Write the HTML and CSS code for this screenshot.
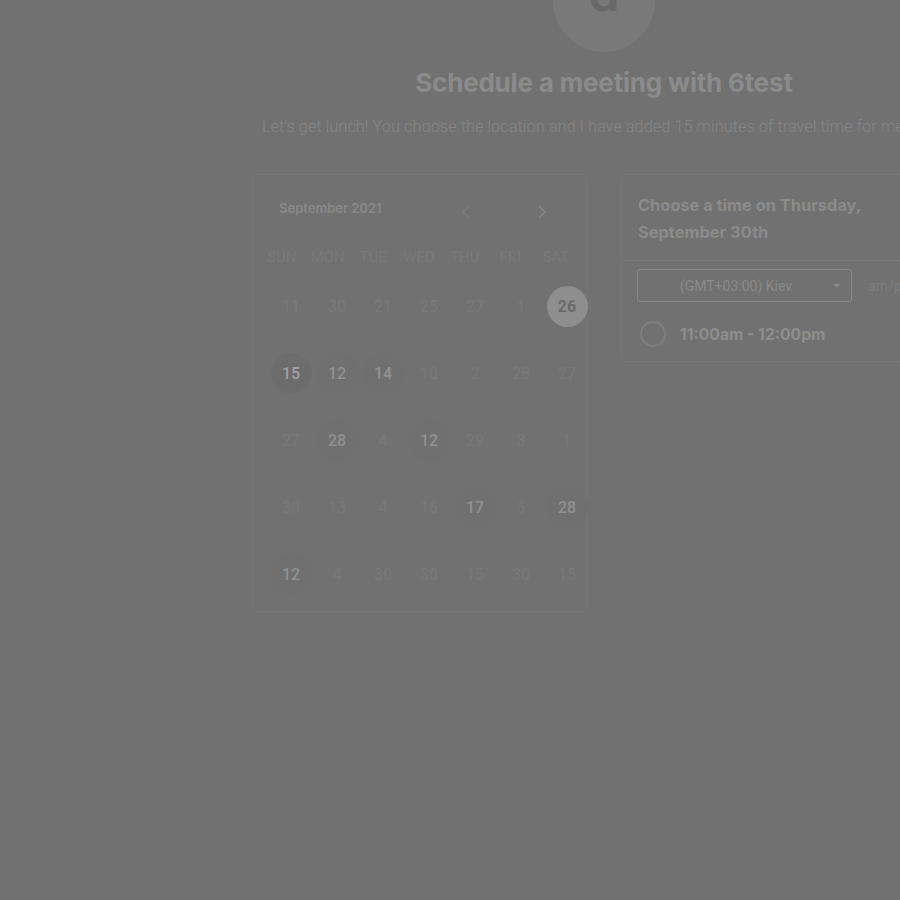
FILE: index.html
```html
<!DOCTYPE html>
<html>
<head>
<meta charset="utf-8">
<link rel="stylesheet" href="styles.css">
</head>
<body>
<div class="page">
  <div class="avatar"><span class="avatar-letter">d</span></div>
  <h1 class="title">Schedule a meeting with 6test</h1>
  <p class="subtitle">Let's get lunch! You choose the location and I have added 15 minutes of travel time for me.</p>
  <div class="cards">
    <div class="card calendar">
      <div class="cal-head">
        <span class="month">September 2021</span>
        <div class="nav">
          <span class="nav-btn prev"><svg width="10" height="16" viewBox="0 0 10 16"><path d="M8 2 L2 8 L8 14" fill="none" stroke="currentColor" stroke-width="1.6"/></svg></span>
          <span class="nav-btn next"><svg width="10" height="16" viewBox="0 0 10 16"><path d="M2 2 L8 8 L2 14" fill="none" stroke="currentColor" stroke-width="1.6"/></svg></span>
        </div>
      </div>
      <div class="weekdays">
        <span>SUN</span><span>MON</span><span>TUE</span><span>WED</span><span>THU</span><span>FRI</span><span>SAT</span>
      </div>
      <div class="days">
        <span class="day">11</span><span class="day">30</span><span class="day">21</span><span class="day">25</span><span class="day">27</span><span class="day">1</span><span class="day selected">26</span>
        <span class="day today">15</span><span class="day avail">12</span><span class="day avail">14</span><span class="day">10</span><span class="day">2</span><span class="day">28</span><span class="day">27</span>
        <span class="day">27</span><span class="day avail">28</span><span class="day">4</span><span class="day avail">12</span><span class="day">29</span><span class="day">3</span><span class="day">1</span>
        <span class="day">30</span><span class="day">13</span><span class="day">4</span><span class="day">16</span><span class="day avail">17</span><span class="day">6</span><span class="day avail">28</span>
        <span class="day avail">12</span><span class="day">4</span><span class="day">30</span><span class="day">30</span><span class="day">15</span><span class="day">30</span><span class="day">15</span>
      </div>
    </div>
    <div class="card times">
      <div class="times-head">Choose a time on Thursday,<br>September 30th</div>
      <div class="tz-row">
        <div class="select"><span class="select-text">(GMT+03:00) Kiev</span><span class="caret"></span></div>
        <span class="ampm">am/pm</span>
      </div>
      <div class="slot"><span class="radio"></span><span class="slot-text">11:00am - 12:00pm</span></div>
    </div>
  </div>
</div>
</body>
</html>
```

FILE: styles.css
```css
html, body {
  margin: 0;
  padding: 0;
  overflow: hidden;
  background: #717171;
  height: 100%;
}
body {
  font-family: Roboto, "Liberation Sans", sans-serif;
}
.page {
  width: 704px;
  margin-left: 252px;
  display: flex;
  flex-direction: column;
  align-items: center;
}
.avatar {
  width: 100px;
  height: 100px;
  margin-top: -50px;
  border-radius: 50%;
  background: #797979;
  border: 1px solid #7d7d7d;
  display: flex;
  align-items: flex-end;
  justify-content: center;
  overflow: hidden;
}
.avatar-letter {
  font-family: Roboto, sans-serif;
  font-size: 56px;
  font-weight: 500;
  color: #686868;
  line-height: 1;
  margin-bottom: 31px;
}
.title {
  margin: 15px 0 0;
  font-family: Inter, "Liberation Sans", sans-serif;
  font-weight: 700;
  font-size: 26px;
  line-height: 32px;
  color: #8b8b8b;
  letter-spacing: -0.2px;
}
.subtitle {
  margin: 16px 0 0;
  align-self: stretch;
  padding-left: 10px;
  white-space: nowrap;
  font-size: 16.4px;
  line-height: 24px;
  font-weight: 300;
  color: #868686;
}
.cards {
  margin-top: 35px;
  align-self: stretch;
  display: flex;
  gap: 34px;
  align-items: flex-start;
}
.card {
  width: 335px;
  box-sizing: border-box;
  border: 1px solid #767676;
  border-radius: 4px;
  background: #717171;
}
.calendar {
  padding: 16px 0 3px;
}
.cal-head {
  height: 34px;
  display: flex;
  align-items: center;
  padding-left: 26px;
}
.month {
  font-family: Inter, "Liberation Sans", sans-serif;
  font-weight: 600;
  font-size: 13px;
  color: #888888;
}
.nav {
  margin-left: auto;
  margin-right: 32px;
  display: flex;
  gap: 52px;
  transform: translateY(4px);
}
.nav-btn {
  width: 24px;
  display: flex;
  justify-content: center;
}
.prev { color: #7b7b7b; }
.next { color: #878787; }
.weekdays {
  margin-top: 17px;
  height: 30px;
  padding-left: 6px;
  display: grid;
  grid-template-columns: repeat(7, 45.7px);
  align-items: center;
  justify-items: center;
  font-size: 15px;
  color: #797979;
}
.days {
  margin-top: 1px;
  padding-left: 15px;
  display: grid;
  grid-template-columns: repeat(7, 46px);
  grid-auto-rows: 67px;
  align-items: center;
  justify-items: center;
}
.day {
  width: 41px;
  height: 41px;
  border-radius: 50%;
  display: flex;
  align-items: center;
  justify-content: center;
  font-size: 16px;
  color: #797979;
}
.day.avail {
  color: #919191;
  font-weight: 500;
  background: #707070;
}
.day.selected {
  background: #8e8e8e;
  color: #6a6a6a;
  font-weight: 700;
}
.day.today {
  color: #a0a0a0;
  font-weight: 500;
  background: radial-gradient(circle, #6b6b6b 0%, #6d6d6d 65%, #717171 100%);
}
.times-head {
  padding: 17px 16px 14px;
  border-bottom: 1px solid #777777;
  font-family: Inter, "Liberation Sans", sans-serif;
  font-weight: 700;
  font-size: 16.4px;
  line-height: 27px;
  color: #8b8b8b;
}
.tz-row {
  display: flex;
  align-items: center;
  padding: 8px 0 0 15px;
  gap: 16px;
}
.select {
  width: 215px;
  height: 33px;
  box-sizing: border-box;
  border: 1px solid #8a8a8a;
  border-radius: 3px;
  display: flex;
  align-items: center;
  flex-shrink: 0;
}
.select-text {
  flex: 1;
  text-align: center;
  font-size: 14px;
  color: #898989;
}
.caret {
  width: 0;
  height: 0;
  border-left: 3.5px solid transparent;
  border-right: 3.5px solid transparent;
  border-top: 4px solid #8e8e8e;
  margin-right: 11px;
}
.ampm {
  font-size: 14px;
  color: #7e7e7e;
  white-space: nowrap;
}
.slot {
  display: flex;
  align-items: center;
  padding: 19px 0 14px 18px;
  gap: 14px;
}
.radio {
  width: 22px;
  height: 22px;
  border: 2px solid #7f7f7f;
  border-radius: 50%;
}
.slot-text {
  font-family: Inter, "Liberation Sans", sans-serif;
  font-weight: 700;
  font-size: 15.7px;
  color: #8d8d8d;
}
```
